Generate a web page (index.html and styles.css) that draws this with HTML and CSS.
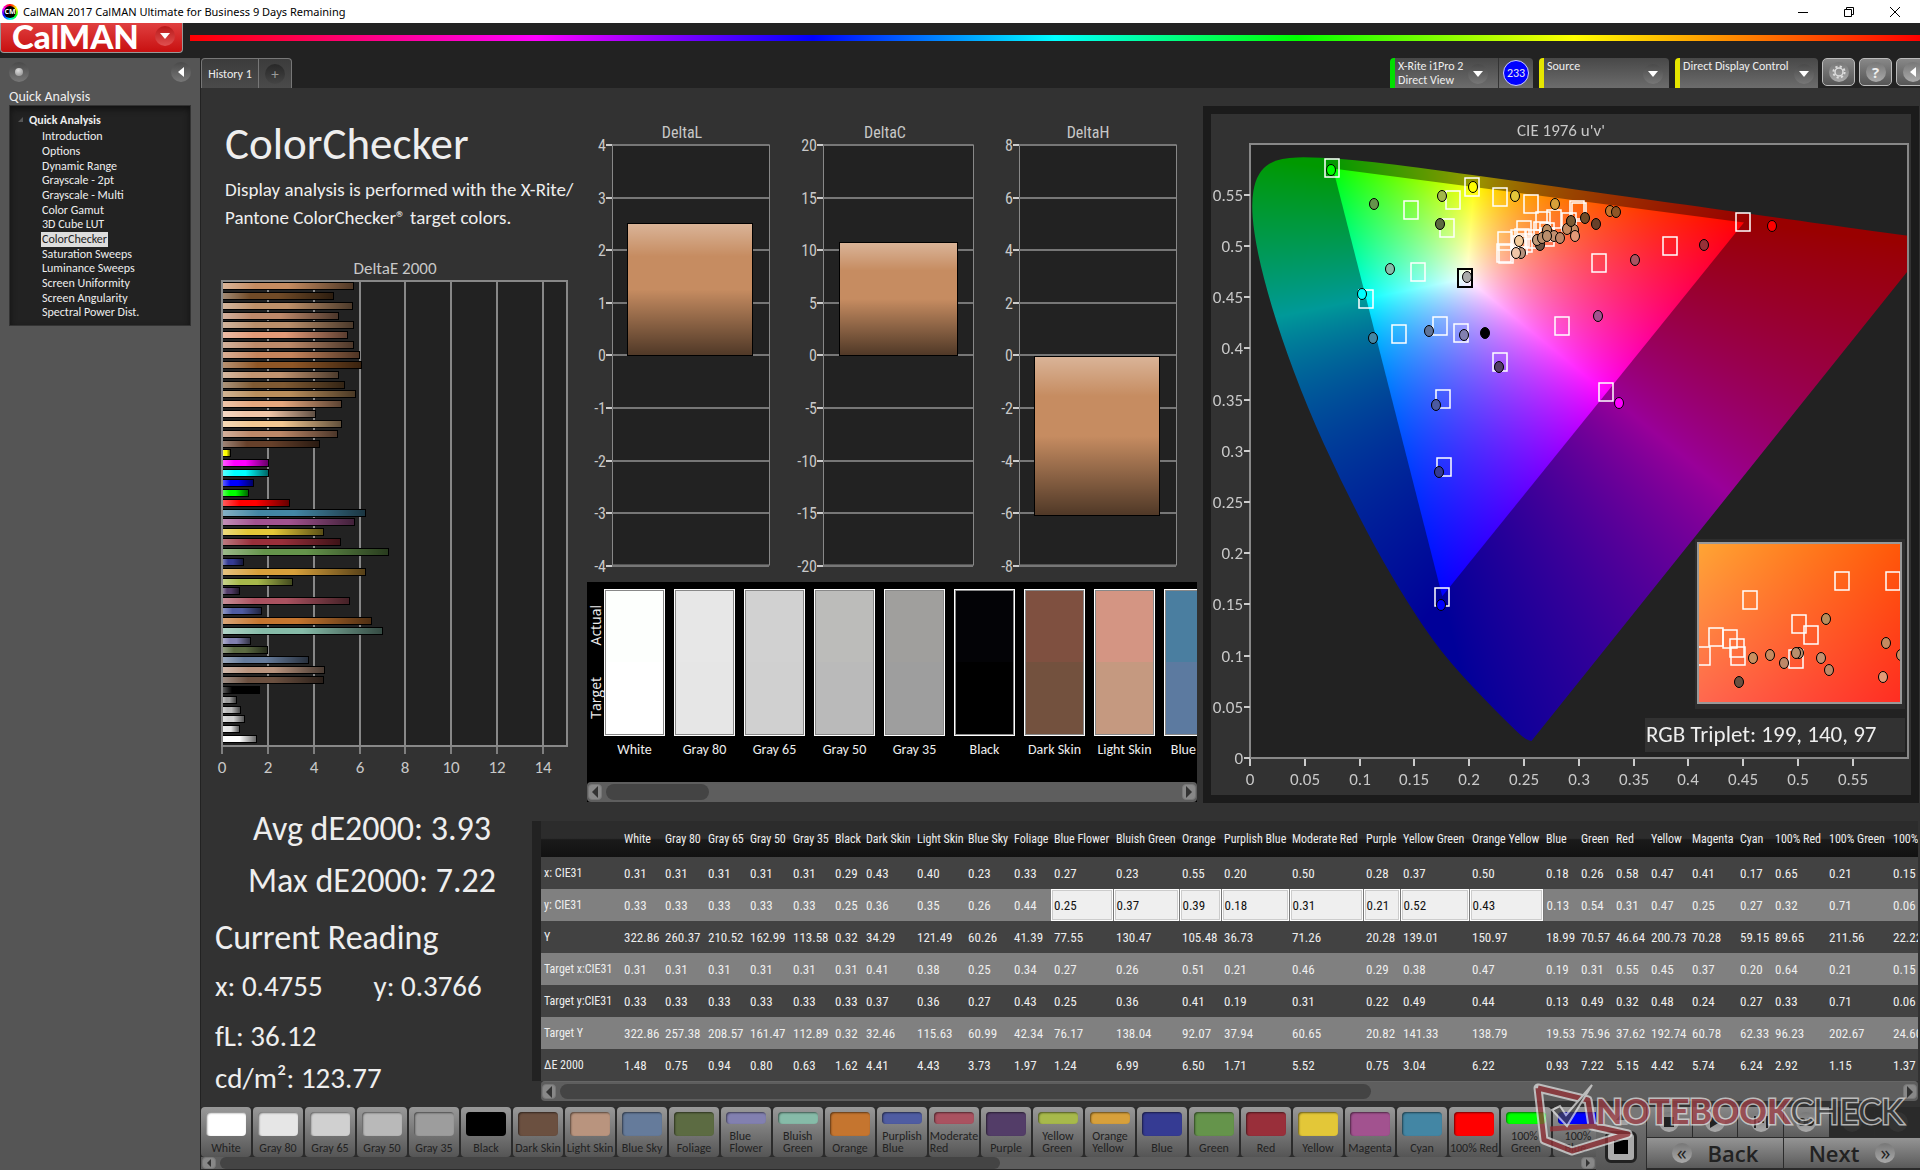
FILE: index.html
```html
<!DOCTYPE html>
<html lang="en">
<head>
<meta charset="utf-8">
<title>CalMAN 2017 CalMAN Ultimate for Business 9 Days Remaining</title>
<link rel="stylesheet" href="styles.css">
</head>
<body>
<header class="titlebar">
  <span class="cm-icon"><span>CM</span></span>
  <span class="titlebar-text">CalMAN 2017 CalMAN Ultimate for Business 9 Days Remaining</span>
  <div class="window-buttons">
    <button type="button" aria-label="Minimize"><svg width="12" height="12" viewBox="0 0 12 12"><path d="M1 6.5h10"/></svg></button>
    <button type="button" aria-label="Restore"><svg width="12" height="12" viewBox="0 0 12 12"><path d="M1.500 3.500h7v7h-7zM3.500 3.500v-2h7v7h-2"/></svg></button>
    <button type="button" aria-label="Close"><svg width="12" height="12" viewBox="0 0 12 12"><path d="M1 1l10 10M11 1L1 11"/></svg></button>
  </div>
</header>

<div class="brandbar">
  <button type="button" class="brand"><span>CalMAN</span><i class="knob knob-red"><b class="tri-down"></b></i></button>
  <div class="spectrum"></div>
</div>

<div class="workspace">
  <aside class="sidebar">
    <div class="sidebar-tools">
      <i class="knob"><b class="dot"></b></i>
      <button type="button" class="knob" aria-label="Collapse"><b class="tri-left"></b></button>
    </div>
    <h2>Quick Analysis</h2>
    <nav class="tree">
      <p><svg width="6" height="6" viewBox="0 0 6 6"><path d="M5 0v5H0z" fill="#555"/></svg>Quick Analysis</p>
      <ul>
        <li><a href="#">Introduction</a></li>
        <li><a href="#">Options</a></li>
        <li><a href="#">Dynamic Range</a></li>
        <li><a href="#">Grayscale - 2pt</a></li>
        <li><a href="#">Grayscale - Multi</a></li>
        <li><a href="#">Color Gamut</a></li>
        <li><a href="#">3D Cube LUT</a></li>
        <li><a href="#" class="selected">ColorChecker</a></li>
        <li><a href="#">Saturation Sweeps</a></li>
        <li><a href="#">Luminance Sweeps</a></li>
        <li><a href="#">Screen Uniformity</a></li>
        <li><a href="#">Screen Angularity</a></li>
        <li><a href="#">Spectral Power Dist.</a></li>
      </ul>
    </nav>
  </aside>

  <main class="main">
    <div class="tabstrip">
      <button type="button" class="tab">History 1</button>
      <button type="button" class="tab tab-add" aria-label="Add tab"><i class="knob knob-dark">+</i></button>
      <div class="devices">
        <div class="device device-meter">
          <button type="button" class="device-pick"><span>X-Rite i1Pro 2<br>Direct View</span><i class="knob"><b class="tri-down"></b></i></button>
          <span class="badge">233</span>
        </div>
        <div class="device"><button type="button" class="device-pick"><span>Source</span><i class="knob"><b class="tri-down"></b></i></button></div>
        <div class="device device-display"><button type="button" class="device-pick"><span>Direct Display Control</span><i class="knob"><b class="tri-down"></b></i></button></div>
        <button type="button" class="square" aria-label="Settings"><i class="knob knob-light"><svg width="14" height="14" viewBox="0 0 14 14" fill="none" stroke="#ddd"><circle cx="7" cy="7" r="4" stroke-width="1.500"/><circle cx="7" cy="7" r="5.600" stroke-width="2" stroke-dasharray="2.200 2.200"/></svg></i></button>
        <button type="button" class="square" aria-label="Help"><i class="knob knob-light help">?</i></button>
        <button type="button" class="square" aria-label="Collapse panel"><i class="knob knob-light"><b class="tri-left"></b></i></button>
      </div>
    </div>

    <div class="content">
      <div class="upper">
        <section class="intro">
          <h1>ColorChecker</h1>
          <p>Display analysis is performed with the X-Rite/<br>Pantone ColorChecker® target colors.</p>
          <svg id="delta-e" width="387" height="530"></svg>
        </section>

        <section class="middle">
          <div class="deltas">
            <svg id="delta-l" width="188" height="450"></svg>
            <svg id="delta-c" width="205" height="450"></svg>
            <svg id="delta-h" width="205" height="450"></svg>
          </div>
          <div class="compare">
            <div class="compare-view">
              <div class="compare-axis"><span>Actual</span><span>Target</span></div>
              <div class="patches" id="patches"></div>
            </div>
            <div class="scrollbar"><button type="button" class="arrow" aria-label="Scroll left"><b class="arr-left"></b></button><i class="thumb thumb-patches"></i><button type="button" class="arrow arrow-end" aria-label="Scroll right"><b class="arr-right"></b></button></div>
          </div>
        </section>

        <section class="cie">
          <div class="cie-plot">
            <canvas id="cie-fill" width="658" height="614"></canvas>
            <svg id="cie-marks" width="701" height="680"></svg>
          </div>
        </section>
      </div>

      <div class="lower">
        <section class="readings">
          <div class="summary">
            <p>Avg dE2000: 3.93</p>
            <p>Max dE2000: 7.22</p>
          </div>
          <h3>Current Reading</h3>
          <p class="xy"><span>x: 0.4755</span><span>y: 0.3766</span></p>
          <p class="luma">fL: 36.12</p>
          <p>cd/m²: 123.77</p>
        </section>
        <section class="data">
          <div class="data-view"><table id="data"></table></div>
          <div class="scrollbar scrollbar-data"><button type="button" class="arrow" aria-label="Scroll left"><b class="arr-left"></b></button><i class="thumb thumb-data"></i><button type="button" class="arrow arrow-end" aria-label="Scroll right"><b class="arr-right"></b></button></div>
        </section>
      </div>
    </div>

    <footer class="dock">
      <div class="dock-left">
        <div class="chips" id="chips"></div>
        <div class="scrollbar scrollbar-dock"><button type="button" class="arrow" aria-label="Scroll left"><b class="arr-left"></b></button><i class="thumb thumb-dock"></i><button type="button" class="arrow arrow-end" aria-label="Scroll right"><b class="arr-right"></b></button></div>
      </div>
      <div class="dock-stop">
        <button type="button" class="up" aria-label="Expand"><i class="knob knob-light"><svg width="12" height="8" viewBox="0 0 12 8"><path d="M1 7l5-6 5 6z" fill="#444"/></svg></i></button>
        <button type="button" class="stop" aria-label="Pattern window"><b></b></button>
      </div>
      <div class="dock-nav">
        <div class="transport">
          <button type="button" aria-label="Stop"><i class="knob knob-light"><svg width="10" height="10"><rect width="10" height="10" fill="#222"/></svg></i></button>
          <button type="button" aria-label="Play"><i class="knob knob-light"><svg width="10" height="12"><path d="M0 0l10 6-10 6z" fill="#222"/></svg></i></button>
          <button type="button" aria-label="Step"><i class="knob knob-light"><svg width="14" height="12"><path d="M1 0v12M13 0v12M4 6h2M8 6h2" stroke="#222" stroke-width="2"/></svg></i></button>
          <button type="button" aria-label="Loop"><i class="knob knob-light"><svg width="16" height="8" fill="none" stroke="#222" stroke-width="2"><circle cx="4" cy="4" r="3"/><circle cx="12" cy="4" r="3"/></svg></i></button>
          <button type="button" class="off" aria-label="Refresh"><i class="knob knob-off"></i></button>
          <button type="button" class="off" aria-label="Record"><i class="knob knob-off"></i></button>
        </div>
        <div class="steps">
          <button type="button"><i class="knob knob-light">«</i><span>Back</span></button>
          <button type="button"><span>Next</span><i class="knob knob-light">»</i></button>
        </div>
      </div>
    </footer>
  </main>
</div>

<svg class="watermark" width="384" height="78" viewBox="0 0 384 78" aria-label="NOTEBOOKCHECK">
  <g fill="none" stroke-linejoin="round">
    <path d="M6 6L56 18L60 44L96 52L40 69L12 58Z" stroke="#ddd" stroke-width="9"/>
    <path d="M6 6L56 18L60 44M60 44L96 52L40 69L12 58L6 6M18 47L60 44" stroke="#963238" stroke-width="5"/>
  </g>
  <path d="M20 28L28 24L34 33L60 3L35 44Z" fill="#444" stroke="#ddd" stroke-width="2"/>
  <text x="64" y="42"><tspan class="wm-red">NOTEBOOK</tspan><tspan class="wm-dark">CHECK</tspan></text>
</svg>
<script src="app.js"></script>
</body>
</html>
```
FILE: styles.css
```css
* { box-sizing: border-box; }
body {
  margin: 0;
  min-height: 100vh;
  display: flex;
  flex-direction: column;
  overflow: hidden;
  background: #222;
  color: #eee;
  font-family: Carlito, Lato, sans-serif;
  font-size: 12px;
}
h1, h2, h3, p, ul { margin: 0; padding: 0; font-weight: normal; }
button { font: inherit; color: inherit; border: 0; padding: 0; background: none; }
a { color: inherit; text-decoration: none; }
svg { display: block; flex: none; }
i { font-style: normal; }

.titlebar {
  height: 23px;
  display: flex;
  align-items: center;
  gap: 5px;
  padding-left: 2px;
  background: #fff;
  color: #000;
}
.cm-icon {
  width: 16px; height: 16px;
  display: grid; place-items: center;
  border-radius: 50%;
  background: conic-gradient(red, yellow, lime, cyan, blue, magenta, red);
}
.cm-icon span {
  width: 12px; height: 12px;
  border-radius: 50%;
  background: #000; color: #fff;
  font: bold 7px/12px "Open Sans", sans-serif;
  text-align: center;
}
.titlebar-text { font: 11px "Noto Sans", sans-serif; }
.window-buttons { margin-left: auto; margin-right: 2px; display: flex; }
.window-buttons button { width: 46px; height: 22px; display: grid; place-items: center; }
.window-buttons svg { fill: none; stroke: #000; }

.brandbar { height: 35px; display: flex; gap: 7px; background: #222; }
.brand {
  width: 183px; height: 30px;
  display: flex; align-items: center; justify-content: space-between;
  padding: 0 7px 4px 11px;
  border: 1px solid #999; border-top: 0;
  border-radius: 0 0 4px 4px;
  background: linear-gradient(#e04040, #c81010);
  color: #fff;
  font: 900 33px/26px Lato, sans-serif;
}
.spectrum {
  flex: 1; height: 6px; margin-top: 12px;
  background: linear-gradient(90deg, #f00, #f0f 20%, #00f 36%, #0ff 50%, #0f0 64%, #ff0 80%, #f00);
}

.knob {
  width: 20px; height: 20px; flex: none;
  display: grid; place-items: center;
  border-radius: 50%;
  background: linear-gradient(#4a4a4a, #777);
}
.knob-red { background: linear-gradient(#b81818, #e05050); }
.knob-dark { background: linear-gradient(#282828, #444); color: #999; font-size: 15px; line-height: 20px; }
.knob-light { background: linear-gradient(#777, #aaa); }
.knob-off { background: #333; }
.tri-down { border: 5px solid transparent; border-top: 6px solid #fff; border-bottom: 0; }
.tri-left { border: 5px solid transparent; border-right: 6px solid #fff; border-left: 0; }
.dot { width: 8px; height: 8px; border-radius: 50%; background: radial-gradient(circle at 40% 30%, #ddd, #888); }

.workspace { flex: 1; display: flex; }
.sidebar { width: 201px; flex: none; padding: 4px 9px; background: #555; border-right: 1px solid #222; }
.sidebar-tools { display: flex; justify-content: space-between; }
.sidebar h2 { margin-top: 6px; font-size: 14px; line-height: 17px; }
.tree {
  height: 221px; padding: 6px 0 0 8px;
  background: #222; border: 1px solid #333;
  box-shadow: inset 0 3px 6px #111;
}
.tree p { display: flex; align-items: center; gap: 5px; font-weight: bold; line-height: 16px; }
.tree ul { padding-top: 1px; }
.tree li { list-style: none; padding-left: 23px; height: 15px; line-height: 15px; }
.tree li:nth-child(3n) { height: 14px; }
.tree a { display: inline-block; padding: 0 1px; }
.tree .selected { background: #ddd; color: #222; }

.main { flex: 1; min-width: 0; display: flex; flex-direction: column; background: #323232; }
.tabstrip { height: 30px; display: flex; background: #222; }
.tab {
  width: 58px;
  border: 1px solid #777; border-bottom: 0;
  border-radius: 4px 0 0 0;
  background: linear-gradient(#3c3c3c, #4a4a4a);
}
.tab-add { width: 33px; display: grid; place-items: center; border-left: 0; border-radius: 0 4px 0 0; }
.devices { margin-left: auto; display: flex; gap: 4px; overflow: hidden; }
.device {
  width: 130px; margin-right: 2px;
  display: flex; align-items: center;
  border-left: 5px solid #e6e600; border-radius: 4px 4px 0 0;
  background: linear-gradient(#484848, #6c6c6c);
}
.device-meter { width: 143px; border-left-color: #00e000; }
.device-display { width: 143px; margin-right: 0; }
.device-pick {
  flex: 1; height: 30px; padding: 1px 6px 0 3px;
  display: flex; justify-content: space-between; align-items: center;
  text-align: left; line-height: 14px; white-space: nowrap;
}
.device-pick span { align-self: flex-start; }
.device-meter .device-pick { border-right: 1px solid #333; padding-right: 10px; }
.device-display .device-pick { padding-right: 4px; }
.badge {
  width: 26px; height: 26px; margin: 0 4px;
  border-radius: 50%; border: 1px solid #ccf;
  background: #00f; text-align: center; line-height: 24px;
}
.square {
  width: 33px; height: 28px; flex: none;
  display: grid; place-items: center;
  border: 1px solid #bbb; border-radius: 5px;
  background: linear-gradient(#888, #555);
}
.square:last-child { margin-right: -9px; }
.help { font: bold 15px/20px "Open Sans", sans-serif; }

.content { flex: 1; }
.upper { height: 733px; display: flex; }
.intro { width: 386px; flex: none; }
.intro h1 { padding: 28px 0 0 24px; font-size: 45px; line-height: 56px; }
.intro p { padding: 4px 0 17px 24px; font-size: 19px; line-height: 28px; white-space: nowrap; }
.middle { width: 610px; flex: none; padding-top: 34px; }
.deltas { display: flex; height: 460px; }
.deltas svg { height: 460px; }
.compare { background: #000; }
.compare-view { height: 200px; display: flex; overflow: hidden; padding-top: 7px; }
.compare-axis { width: 17px; height: 146px; flex: none; display: flex; flex-direction: column; justify-content: space-around; }
.compare-axis span { writing-mode: vertical-rl; transform: rotate(180deg); text-align: center; font: 14px/17px "Open Sans", sans-serif; }
.patches { display: flex; gap: 9px; }
.patch { width: 61px; flex: none; text-align: center; font-size: 14px; line-height: 28px; white-space: nowrap; }
.patch div { height: 147px; border: 1px solid #fff; outline: 1px solid #888; outline-offset: -2px; }

.scrollbar { height: 20px; padding: 2px 1px; display: flex; align-items: stretch; background: #5e5e5e; border-radius: 4px; }
.arrow { width: 14px; flex: none; display: grid; place-items: center; border-radius: 4px; background: #888; border: 1px solid #777; }
.arrow-end { margin-left: auto; }
.arr-left { border: 6px solid transparent; border-right: 6px solid #333; border-left: 0; }
.arr-right { border: 6px solid transparent; border-left: 6px solid #333; border-right: 0; }
.thumb { margin-left: 4px; border-radius: 8px; background: #444; }
.thumb-patches { width: 103px; }
.thumb-data { width: 59%; }
.thumb-dock { width: 56%; }
.scrollbar-data { margin-left: 9px; border-top: 1px solid #666; }
.scrollbar-dock { height: 12px; padding: 0 1px; border-radius: 0; }
.scrollbar-dock .arr-left, .scrollbar-dock .arr-right { border-width: 4px; }
.scrollbar-dock .arr-left { border-left: 0; }
.scrollbar-dock .arr-right { border-right: 0; }

.cie { flex: 1; margin: 18px 1px 18px 6px; height: 697px; border: 8px solid #1b1b1b; overflow: hidden; }
.cie-plot { position: relative; height: 681px; padding: 30px 0 0 39px; }
.cie-plot canvas { display: block; background: #222; }
.cie-plot svg { position: absolute; left: 0; top: 0; }

.axis { font-size: 17px; fill: #c8c8c8; }
.axis-narrow { font-family: "Roboto Condensed", Roboto, sans-serif; font-size: 16px; fill: #c8c8c8; }
.triplet { font-size: 23px; fill: #eee; }

.lower { display: flex; height: 282px; }
.readings { width: 331px; flex: none; padding-left: 14px; font-size: 29px; line-height: 42px; }
.summary { width: 316px; margin-left: -1px; text-align: center; font-size: 34px; line-height: 52px; margin-top: -18px; }
.readings h3 { margin-top: 2px; font-size: 34px; line-height: 58px; }
.xy { display: flex; margin-top: -2px; }
.xy span { width: 162px; }
.luma { margin-top: 8px; }
.data { flex: 1; min-width: 0; margin-right: 2px; }
.data-view { overflow: hidden; border-left: 9px solid #222; background: #424242; }
table { width: 1422px; table-layout: fixed; border-collapse: collapse; font-family: "Roboto Condensed", Roboto, sans-serif; font-size: 13px; }
th, td { height: 32px; padding: 0 0 0 3px; text-align: left; font-weight: normal; white-space: nowrap; }
thead th { height: 36px; background: linear-gradient(#2c2c2c 48%, #1a1a1a 52%, #111); font-size: 12px; }
tbody th { font-size: 12px; }
tbody tr:nth-child(2n) { background: #808080; }
td.picked { background: #efefef; color: #111; border-right: 1px solid #777; box-shadow: inset 0 0 0 1px #fff, inset 0 0 0 2px #ccc; }

.dock { height: 63px; display: flex; background: #2b2b2b; }
.dock-left { flex: 1; min-width: 0; }
.chips { display: flex; gap: 2px; height: 50px; overflow: hidden; }
.chip {
  width: 50px; height: 50px; flex: none;
  display: flex; flex-direction: column; align-items: center; justify-content: space-between;
  padding: 5px 0 3px;
  border-radius: 4px;
  background: linear-gradient(#999, #555);
  color: #222; font-size: 12px; line-height: 12px; text-align: left; white-space: nowrap;
}
.chip b { width: 40px; height: 24px; border-radius: 4px; box-shadow: inset 1px 1px 2px #0008; }
.chip.two b { height: 12px; }
.dock-stop { width: 50px; flex: none; display: flex; flex-direction: column; gap: 1px; background: linear-gradient(#777, #555); }
.up { height: 18px; display: grid; place-items: center; background: #777; overflow: hidden; }
.stop { width: 32px; height: 32px; margin: 5px 9px; display: grid; place-items: center; border: 3px solid #222; border-radius: 6px; background: #aaa; }
.stop b { width: 14px; height: 14px; background: #000; }
.dock-nav { width: 274px; flex: none; display: flex; flex-direction: column; gap: 1px; padding-left: 1px; }
.transport, .steps { display: flex; gap: 1px; height: 30px; }
.transport button, .steps button { flex: 1; display: flex; align-items: center; justify-content: center; background: linear-gradient(#888, #5c5c5c); }
.transport .off { background: #2a2a2a; }
.steps button { gap: 16px; background: linear-gradient(#949494, #5a5a5a); color: #222; font: 600 22px/30px "Open Sans", sans-serif; }
.steps .knob { font-size: 20px; line-height: 16px; font-weight: 400; }

.watermark { position: absolute; right: 4px; bottom: 10px; opacity: 0.75; pointer-events: none; }
.watermark text { font: 900 34px Lato, sans-serif; stroke: #ddd; stroke-width: 3px; paint-order: stroke; }
.wm-red { fill: #a04048; }
.wm-dark { fill: #3c3c3c; font-weight: 400; }
```
FILE: app.js
```js
// ---- Patch data: name, target colour, x, y, Y, target x, target y, target Y, dE, column width
const patches = [
  ["White", "#ffffff", "0.31", "0.33", "322.86", "0.31", "0.33", "322.86", "1.48", 41],
  ["Gray 80", "#e6e6e6", "0.31", "0.33", "260.37", "0.31", "0.33", "257.38", "0.75", 43],
  ["Gray 65", "#d0d0d0", "0.31", "0.33", "210.52", "0.31", "0.33", "208.57", "0.94", 42],
  ["Gray 50", "#b9b9b9", "0.31", "0.33", "162.99", "0.31", "0.33", "161.47", "0.80", 43],
  ["Gray 35", "#9d9d9d", "0.31", "0.33", "113.58", "0.31", "0.33", "112.89", "0.63", 42],
  ["Black", "#000000", "0.29", "0.25", "0.32", "0.31", "0.33", "0.32", "1.62", 31],
  ["Dark Skin", "#6b5040", "0.43", "0.36", "34.29", "0.41", "0.37", "32.46", "4.41", 51],
  ["Light Skin", "#b9947e", "0.40", "0.35", "121.49", "0.38", "0.36", "115.63", "4.43", 51],
  ["Blue Sky", "#657b9b", "0.23", "0.26", "60.26", "0.25", "0.27", "60.99", "3.73", 46],
  ["Foliage", "#5c6b42", "0.33", "0.44", "41.39", "0.34", "0.43", "42.34", "1.97", 40],
  ["Blue Flower", "#8280b0", "0.27", "0.25", "77.55", "0.27", "0.25", "76.17", "1.24", 62],
  ["Bluish Green", "#86bba8", "0.23", "0.37", "130.47", "0.26", "0.36", "138.04", "6.99", 66],
  ["Orange", "#c5752f", "0.55", "0.39", "105.48", "0.51", "0.41", "92.07", "6.50", 42],
  ["Purplish Blue", "#4f5ca2", "0.20", "0.18", "36.73", "0.21", "0.19", "37.94", "1.71", 68],
  ["Moderate Red", "#aa5260", "0.50", "0.31", "71.26", "0.46", "0.31", "60.65", "5.52", 74],
  ["Purple", "#533d68", "0.28", "0.21", "20.28", "0.29", "0.22", "20.82", "0.75", 37],
  ["Yellow Green", "#a7b94b", "0.37", "0.52", "139.01", "0.38", "0.49", "141.33", "3.04", 69],
  ["Orange Yellow", "#d7a03b", "0.50", "0.43", "150.97", "0.47", "0.44", "138.79", "6.22", 74],
  ["Blue", "#353b93", "0.18", "0.13", "18.99", "0.19", "0.13", "19.53", "0.93", 35],
  ["Green", "#65944b", "0.26", "0.54", "70.57", "0.31", "0.49", "75.96", "7.22", 35],
  ["Red", "#992f3a", "0.58", "0.31", "46.64", "0.55", "0.32", "37.62", "5.15", 35],
  ["Yellow", "#e3c738", "0.47", "0.47", "200.73", "0.45", "0.48", "192.74", "4.42", 41],
  ["Magenta", "#a2528f", "0.41", "0.25", "70.28", "0.37", "0.24", "60.78", "5.74", 48],
  ["Cyan", "#4386a4", "0.17", "0.27", "59.15", "0.20", "0.27", "62.33", "6.24", 35],
  ["100% Red", "#ff0000", "0.65", "0.32", "89.65", "0.64", "0.33", "96.23", "2.92", 54],
  ["100% Green", "#00ff00", "0.21", "0.71", "211.56", "0.21", "0.71", "202.67", "1.15", 64],
  ["100% Blue", "#0000ff", "0.15", "0.06", "22.22", "0.15", "0.06", "24.60", "1.37", 73]
];

// ---- Data table
const rowNames = ["x: CIE31", "y: CIE31", "Y", "Target x:CIE31", "Target y:CIE31", "Target Y", "ΔE 2000"];
let html = '<colgroup><col style="width:80px">' + patches.map(p => `<col style="width:${p[9]}px">`).join("") + "</colgroup>";
html += "<thead><tr><th></th>" + patches.map(p => `<th scope="col">${p[0]}</th>`).join("") + "</tr></thead><tbody>";
rowNames.forEach((name, r) => {
  html += `<tr><th scope="row">${name}</th>` + patches.map((p, c) =>
    `<td${r === 1 && c >= 10 && c <= 17 ? ' class="picked"' : ""}>${p[r + 2]}</td>`).join("") + "</tr>";
});
document.getElementById("data").innerHTML = html + "</tbody>";

// ---- Pattern buttons
const twoLine = [10, 11, 13, 14, 16, 17, 25, 26];
document.getElementById("chips").innerHTML = patches.map((p, i) => {
  const two = twoLine.includes(i);
  return `<button type="button" class="chip${two ? " two" : ""}"><b style="background:${p[1]}"></b><span>${two ? p[0].replace(" ", "<br>") : p[0]}</span></button>`;
}).join("");

// ---- Actual / target comparison
const pairs = [["White", "#fdfffd", "#fff"], ["Gray 80", "#e7e7e7", "#e6e6e6"], ["Gray 65", "#d1d1d1", "#d0d0d0"],
  ["Gray 50", "#bcbcba", "#bababa"], ["Gray 35", "#a09f9d", "#9e9e9e"], ["Black", "#030306", "#000"],
  ["Dark Skin", "#7f5040", "#73513e"], ["Light Skin", "#d49583", "#c59980"], ["Blue Sky", "#4a7ea0", "#5c7aa0"]];
document.getElementById("patches").innerHTML = pairs.map(p =>
  `<div class="patch"><div style="background:linear-gradient(${p[1]} 50%, ${p[2]} 50%)"></div>${p[0]}</div>`).join("");

// ---- Delta E bar chart
const extras = [[5.7, "#c68c61"], [4.85, "#704a27"], [5.65, "#be9069"], [5.07, "#bd886a"], [5.7, "#b98e6a"], [5.45, "#e39a77"],
  [5.7, "#bd8a69"], [5.98, "#c5845c"], [6.05, "#8f5626"], [5.07, "#c19470"], [5.3, "#7f5a33"], [5.8, "#b98e5c"], [5.2, "#e6a87e"],
  [4.05, "#f1c6a8"], [5.2, "#f3c893"], [5, "#bd8868"], [4.22, "#66402a"], [0.35, "#ff0"], [2.02, "#f0f"], [2.02, "#0ff"]];
const bars = extras.concat(patches.map(p => [+p[8], p[1]]).reverse());
let out = '<text class="axis" x="194" y="25" text-anchor="middle">DeltaE 2000</text><rect x="21" y="32" width="345" height="465" fill="#222" stroke="#888" stroke-width="2"/>';
for (let v = 0; v <= 14; v += 2) {
  const x = Math.round(21 + v * 22.93);
  if (v) out += `<path d="M${x} 33V497" stroke="#888" stroke-width="2"/>`;
  out += `<path d="M${x} 498v7" stroke="#ccc"/><text class="axis" x="${x}" y="524" text-anchor="middle">${v}</text>`;
}
out += '<defs><linearGradient id="gx"><stop stop-color="#fff" stop-opacity=".35"/><stop offset=".25" stop-color="#fff" stop-opacity="0"/><stop offset=".5" stop-opacity="0"/><stop offset="1" stop-opacity=".6"/></linearGradient>' +
  '<linearGradient id="gy" x2="0" y2="1"><stop stop-color="#fff" stop-opacity=".35"/><stop offset=".25" stop-color="#fff" stop-opacity="0"/><stop offset=".5" stop-opacity="0"/><stop offset="1" stop-opacity=".6"/></linearGradient></defs>';
bars.forEach((b, i) => {
  const y = Math.round(33 + i * 9.85), w = Math.round(b[0] * 22.93);
  out += `<rect x="22" y="${y}" width="${w}" height="8"/><rect x="22" y="${y + 1}" width="${w - 1}" height="6" fill="${b[1]}"/><rect x="22" y="${y + 1}" width="${w - 1}" height="6" fill="url(#gx)"/>`;
});
document.getElementById("delta-e").innerHTML = out;

// ---- Delta L / C / H charts
function deltaChart(id, title, mid, left, width, step, bar) {
  let s = `<text class="axis-narrow" x="${mid}" y="16" text-anchor="middle">${title}</text><rect x="${left}.5" y="23" width="${width}" height="420" fill="#222" stroke="#888"/>`;
  for (let i = 0; i <= 8; i++) {
    const y = Math.round(23 + i * 52.6);
    s += `<path d="M${left} ${y}h${width}" stroke="#777" stroke-width="2"/><path d="M${left - 6} ${y}h6" stroke="#ccc" stroke-width="2"/><text class="axis-narrow" x="${left - 6}" y="${y + 6}" text-anchor="end">${(4 - i) * step}</text>`;
  }
  const box = `x="${bar[0]}.5" y="${bar[1]}.5" width="${bar[2]}" height="${bar[3]}"`;
  s += `<rect ${box} fill="#c68c61"/><rect ${box} fill="url(#gy)" stroke="#000"/>`;
  document.getElementById(id).innerHTML = s;
}
deltaChart("delta-l", "DeltaL", 95, 25, 157, 1, [40, 101, 125, 132]);
deltaChart("delta-c", "DeltaC", 110, 48, 150, 5, [64, 120, 118, 113]);
deltaChart("delta-h", "DeltaH", 108, 39, 157, 2, [54, 234, 125, 159]);

// ---- CIE 1976 u'v' diagram
const SX = 1096, SY = 1024, W = 658, H = 614;
const locus = [[.1741,.005],[.1714,.0051],[.1644,.0109],[.1566,.0177],[.144,.0297],[.1355,.0399],[.1241,.0578],[.1096,.0868],[.0913,.1327],
  [.0687,.2007],[.0454,.295],[.0235,.4127],[.0082,.5384],[.0039,.6548],[.0139,.7502],[.0389,.812],[.0743,.8338],[.1142,.8262],[.1547,.8059],
  [.2296,.7543],[.3016,.6923],[.3731,.6245],[.4441,.5547],[.5125,.4866],[.5752,.4242],[.627,.3725],[.6915,.3083],[.719,.2809],[.7347,.2653]]
  .map(([x, y]) => { const d = -2 * x + 12 * y + 3; return [4 * x / d * SX, H - 9 * y / d * SY]; });

function fillLayer(dim) {
  const c = document.createElement("canvas");
  c.width = W; c.height = H;
  const cx = c.getContext("2d"), img = cx.createImageData(W, H);
  for (let j = 0; j < H; j++) for (let i = 0; i < W; i++) {
    const u = (i + .5) / SX, v = (H - j - .5) / SY;
    const X = 9 * u / (4 * v), Z = (12 - 3 * u - 20 * v) / (4 * v);
    let rgb = [2.0414 * X - .565 - .3447 * Z, -.9693 * X + 1.876 + .0416 * Z, .0134 * X - .1184 + 1.0154 * Z].map(n => Math.max(0, n));
    const m = Math.max(...rgb), k = (j * W + i) * 4;
    rgb.forEach((n, q) => { img.data[k + q] = 255 * dim * Math.pow(n / m, .85); });
    img.data[k + 3] = 255;
  }
  cx.putImageData(img, 0, 0);
  return c;
}
const ctx = document.getElementById("cie-fill").getContext("2d");
function clipDraw(points, layer, smooth) {
  ctx.save();
  ctx.beginPath();
  if (smooth) {
    ctx.moveTo(...points[0]);
    for (let i = 1; i < points.length - 1; i++) {
      const a = points[i], b = points[i + 1];
      ctx.quadraticCurveTo(a[0], a[1], (a[0] + b[0]) / 2, (a[1] + b[1]) / 2);
    }
    ctx.lineTo(...points[points.length - 1]);
  } else points.forEach(p => ctx.lineTo(...p));
  ctx.closePath();
  ctx.clip();
  ctx.drawImage(layer, 0, 0);
  ctx.restore();
}
clipDraw(locus, fillLayer(.6), true);
clipDraw([[.4507, .5229], [.0757, .5757], [.1754, .1579]].map(([u, v]) => [u * SX, H - v * SY]), fillLayer(1));

// Zoomed inset, blended between its four corner colours
ctx.fillStyle = "#2d2d2d";
ctx.fillRect(445, 395, 210, 170);
const inset = ctx.createImageData(203, 160);
for (let j = 0; j < 160; j++) for (let i = 0; i < 203; i++) {
  const a = i / 202, b = j / 159, k = (j * 203 + i) * 4;
  inset.data[k] = 255;
  inset.data[k + 1] = (165 * (1 - a) + 88 * a) * (1 - b) + (104 * (1 - a) + 45 * a) * b;
  inset.data[k + 2] = (52 * (1 - a) + 8 * a) * (1 - b) + (80 * (1 - a) + 34 * a) * b;
  inset.data[k + 3] = 255;
}
ctx.putImageData(inset, 448, 399);

const squares = [[82,23],[161,65],[203,55],[197,83],[222,42],[250,52],[281,59],[168,127],[116,154],[149,189],[190,181],[211,188],[250,217],
  [193,254],[194,322],[312,181],[327,65],[329,67],[304,74],[293,76],[274,85],[255,96],[254,108],[256,109],[268,94],[272,93],[275,98],[270,100],
  [297,87],[291,86],[283,94],[297,92],[319,77],[349,118],[420,101],[493,77],[356,247],[192,452]];
const dots = [[81,25,"#0f0"],[124,59,"#65944b"],[192,51,"#a3b74a"],[190,79,"#5b6b3f"],[223,42,"#ff0"],[265,51,"#e3c73a"],[305,59,"#d7a03a"],
  [140,124,"#86bba8"],[112,149,"#0ff"],[123,193,"#4486a3"],[179,186,"#5f7499"],[214,190,"#8280b0"],[235,188,"#000"],[249,222,"#523d66"],
  [186,260,"#4c5aa0"],[189,327,"#353a92"],[217,132,"#aaa"],[271,108,"#b5917c"],[266,108,"#f1c6a8"],[269,96,"#f3cb9a"],[290,100,"#6b5040"],
  [287,95,"#c19a78"],[292,93,"#b98e6c"],[297,85,"#b98e62"],[304,91,"#c29070"],[297,91,"#b98e6c"],[310,93,"#bd8868"],[324,85,"#c68c61"],
  [317,84,"#c58a60"],[325,91,"#e39a77"],[321,76,"#7a5a33"],[335,73,"#704a27"],[346,79,"#66402a"],[360,66,"#c5752f"],[366,67,"#8f5626"],
  [385,115,"#a95361"],[454,100,"#973038"],[522,81,"#f00"],[348,171,"#a2528f"],[369,258,"#f0f"],[191,460,"#00f"]];
const insetSquares = [[592,436],[643,436],[500,455],[549,479],[561,490],[466,492],[480,494],[487,503],[488,511],[546,514],[453,511]];
const insetDots = [[576,474,"#b98e5c"],[636,498,"#c58a60"],[503,513,"#c99060"],[520,510,"#c58a60"],[534,518,"#bd8868"],[549,508,"#b98e6c"],
  [546,508,"#b98e6c"],[571,513,"#c29070"],[579,525,"#bd8868"],[633,532,"#e39a77"],[651,510,"#c68c61"],[489,537,"#6b5040"]];
const sq = (p, c = "#fff") => `<rect x="${p[0] - 7}" y="${p[1] - 9}" width="14" height="18" fill="none" stroke="${c}" stroke-width="${c === "#fff" ? 1.5 : 2}"/>`;
const dot = p => `<ellipse cx="${p[0]}" cy="${p[1]}" rx="4.500" ry="5.500" fill="${p[2]}" stroke="#000"/>`;

let cie = '<text class="axis" x="350" y="22" text-anchor="middle">CIE 1976 u\'v\'</text><path d="M39 644V30H697V644Z" fill="none" stroke="#888" stroke-width="2"/>';
for (let i = 0; i <= 11; i++) {
  const label = String(i * 5 / 100), x = Math.round(39 + i * .05 * SX), y = Math.round(644 - i * .05 * SY);
  cie += `<path d="M${x} 645v7M33 ${y}h6" stroke="#ccc" stroke-width="2"/><text class="axis" x="${x}" y="671" text-anchor="middle">${label}</text><text class="axis" x="32" y="${y + 6}" text-anchor="end">${label}</text>`;
}
cie += '<g transform="translate(39 31)">' + squares.map(p => sq(p)).join("") + sq([215, 133], "#000") + dots.map(dot).join("") +
  '<clipPath id="ic"><path d="M448 399h203v160h-203z"/></clipPath><g clip-path="url(#ic)">' + insetSquares.map(p => sq(p)).join("") + insetDots.map(dot).join("") + "</g>" +
  '<path d="M448 398h203v160h-203z" fill="none" stroke="#999" stroke-width="2"/><path d="M395 573h260v34h-260z" fill="#323232"/><text class="triplet" x="396" y="597">RGB Triplet: 199, 140, 97</text></g>';
document.getElementById("cie-marks").innerHTML = cie;
```
